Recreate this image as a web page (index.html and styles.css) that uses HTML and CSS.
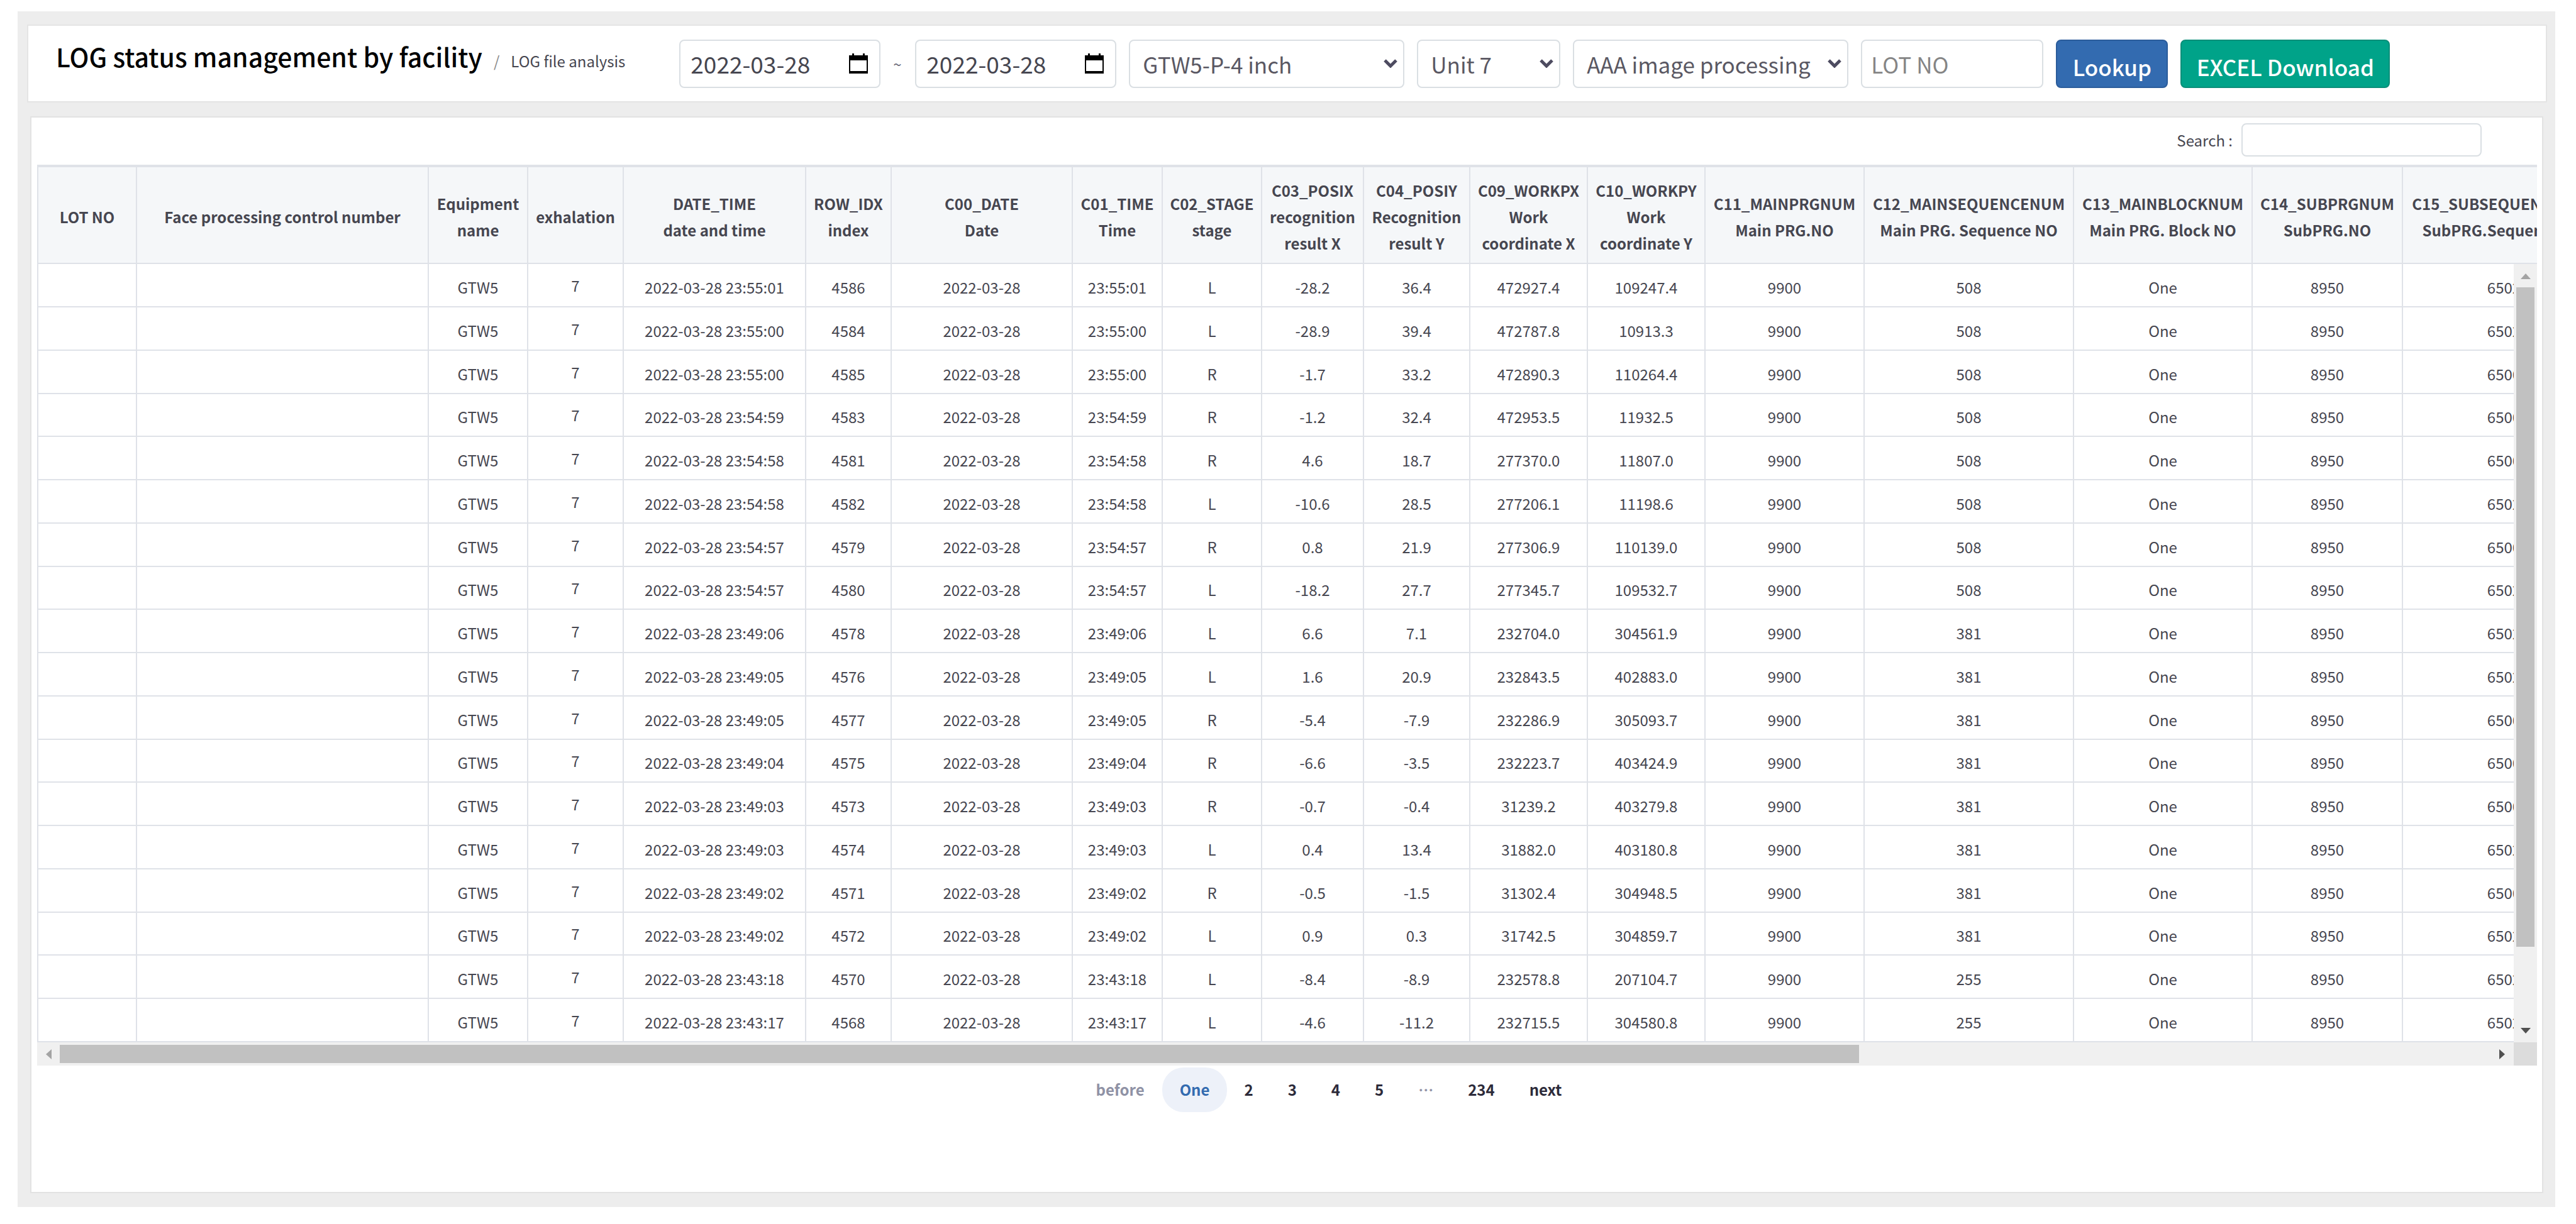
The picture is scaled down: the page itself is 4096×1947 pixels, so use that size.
FILE: index.html
```html
<!DOCTYPE html>
<html lang="en">
<head>
<meta charset="utf-8">
<title>LOG status management by facility</title>
<link rel="stylesheet" href="styles.css">
</head>
<body>
<main class="page">
  <header class="topbar">
    <div class="heading">
      <h1 class="heading-title">LOG status management by facility</h1>
      <span class="heading-slash">/</span>
      <span class="heading-sub">LOG file analysis</span>
    </div>
    <form class="filters">
      <div class="date-field">
        <input class="date-input" type="text" value="2022-03-28" aria-label="Start date">
        <button class="date-button" type="button" aria-label="Open start calendar">
          <svg class="date-icon" viewBox="0 0 30 32"><path d="M1 4h28v27H1z" fill="#fff" stroke="#000" stroke-width="2"/><path d="M0 3h5V0h3v3h14V0h3v3h5v8H0zM0 28h30v3H0z" fill="#000"/></svg>
        </button>
      </div>
      <span class="range-mark">~</span>
      <div class="date-field">
        <input class="date-input" type="text" value="2022-03-28" aria-label="End date">
        <button class="date-button" type="button" aria-label="Open end calendar">
          <svg class="date-icon" viewBox="0 0 30 32"><path d="M1 4h28v27H1z" fill="#fff" stroke="#000" stroke-width="2"/><path d="M0 3h5V0h3v3h14V0h3v3h5v8H0zM0 28h30v3H0z" fill="#000"/></svg>
        </button>
      </div>
      <div class="select-field select-wide">
        <select class="select" aria-label="Equipment"><option>GTW5-P-4 inch</option></select>
        <svg class="select-arrow" viewBox="0 0 22 14"><path d="M2 2l9 9 9-9" fill="none" stroke="#4d4b60" stroke-width="5"/></svg>
      </div>
      <div class="select-field select-narrow">
        <select class="select" aria-label="Unit"><option>Unit 7</option></select>
        <svg class="select-arrow" viewBox="0 0 22 14"><path d="M2 2l9 9 9-9" fill="none" stroke="#4d4b60" stroke-width="5"/></svg>
      </div>
      <div class="select-field select-wide">
        <select class="select" aria-label="Process"><option>AAA image processing</option></select>
        <svg class="select-arrow" viewBox="0 0 22 14"><path d="M2 2l9 9 9-9" fill="none" stroke="#4d4b60" stroke-width="5"/></svg>
      </div>
      <input class="lot-input" type="text" placeholder="LOT NO" aria-label="LOT NO">
      <button class="button button-lookup" type="button">Lookup</button>
      <button class="button button-excel" type="button">EXCEL Download</button>
    </form>
  </header>

  <section class="panel">
    <div class="search">
      <label class="search-label" for="search">Search :</label>
      <input class="search-input" id="search" type="text">
    </div>

    <div class="viewport">
      <table class="log">
        <colgroup>
          <col class="c-lot"><col class="c-face"><col class="c-equip"><col class="c-unit"><col class="c-datetime"><col class="c-row"><col class="c-date"><col class="c-time"><col class="c-stage"><col class="c-posx"><col class="c-posy"><col class="c-work"><col class="c-work"><col class="c-prg"><col class="c-seq"><col class="c-block"><col class="c-subprg"><col class="c-subseq">
        </colgroup>
        <thead>
          <tr>
            <th>LOT NO</th>
            <th>Face processing control number</th>
            <th>Equipment<br>name</th>
            <th>exhalation</th>
            <th>DATE_TIME<br>date and time</th>
            <th>ROW_IDX<br>index</th>
            <th>C00_DATE<br>Date</th>
            <th>C01_TIME<br>Time</th>
            <th>C02_STAGE<br>stage</th>
            <th>C03_POSIX<br>recognition<br>result X</th>
            <th>C04_POSIY<br>Recognition<br>result Y</th>
            <th>C09_WORKPX<br>Work<br>coordinate X</th>
            <th>C10_WORKPY<br>Work<br>coordinate Y</th>
            <th>C11_MAINPRGNUM<br>Main PRG.NO</th>
            <th>C12_MAINSEQUENCENUM<br>Main PRG. Sequence NO</th>
            <th>C13_MAINBLOCKNUM<br>Main PRG. Block NO</th>
            <th>C14_SUBPRGNUM<br>SubPRG.NO</th>
            <th>C15_SUBSEQUENCENUM<br>SubPRG.Sequence NO</th>
          </tr>
        </thead>
        <tbody id="rows"></tbody>
      </table>
      <div class="vbar">
        <svg class="vbar-arrow" viewBox="0 0 16 9"><path d="M8 0l8 9H0z" fill="#a3a3a3"/></svg>
        <div class="vbar-track"><div class="vbar-thumb"></div></div>
        <svg class="vbar-arrow" viewBox="0 0 16 9"><path d="M0 0h16L8 9z" fill="#505050"/></svg>
      </div>
    </div>
    <div class="hbar">
      <div class="hbar-body">
        <svg class="hbar-arrow" viewBox="0 0 9 16"><path d="M9 0v16L0 8z" fill="#a3a3a3"/></svg>
        <div class="hbar-track"><div class="hbar-thumb"></div></div>
        <svg class="hbar-arrow" viewBox="0 0 9 16"><path d="M0 0l9 8-9 8z" fill="#505050"/></svg>
      </div>
      <div class="hbar-corner"></div>
    </div>

    <nav class="pager" aria-label="Pages">
      <a class="page-link is-muted" href="#">before</a>
      <a class="page-link is-current" href="#">One</a>
      <a class="page-link" href="#">2</a>
      <a class="page-link" href="#">3</a>
      <a class="page-link" href="#">4</a>
      <a class="page-link" href="#">5</a>
      <span class="page-link is-muted">…</span>
      <a class="page-link" href="#">234</a>
      <a class="page-link" href="#">next</a>
    </nav>
  </section>
</main>
<script src="script.js"></script>
</body>
</html>
```
FILE: styles.css
```css
* {
  box-sizing: border-box;
}

body {
  margin: 0;
  min-height: 100vh;
  display: flex;
  padding: 18px 33px 27px 28px;
  background: #fff;
  color: #464650;
  font-family: "Noto Sans CJK KR", "Noto Sans", sans-serif;
  font-size: 24px;
}

input,
select,
button {
  font: inherit;
  color: inherit;
  margin: 0;
}

.page {
  flex: 1;
  min-width: 0;
  display: flex;
  flex-direction: column;
  gap: 22px;
  padding: 21px 13px 22px 15px;
  background: #ededed;
}

/* Top bar */

.topbar {
  display: flex;
  align-items: center;
  gap: 86px;
  height: 124px;
  padding-left: 44px;
  background: #fff;
  border: 2px solid #e4e4e4;
}

.heading {
  display: flex;
  align-items: baseline;
  gap: 18px;
  padding-bottom: 16px;
  line-height: 60px;
  white-space: nowrap;
}

.heading-title {
  margin: 0;
  color: #000;
  font-size: 41px;
  font-weight: 500;
}

.heading-slash {
  color: #8a8a8a;
}

.filters {
  display: flex;
  align-items: center;
  gap: 20px;
  font-size: 35px;
}

.date-field,
.lot-input,
.select {
  height: 77px;
  background: #fff;
  border: 2px solid #dadfe3;
  border-radius: 8px;
}

.date-field {
  display: flex;
  align-items: center;
  width: 320px;
  padding: 0 18px 0 16px;
  font-size: 37px;
}

.date-input {
  flex: 1;
  min-width: 0;
  padding: 0;
  border: 0;
  background: none;
}

.date-button {
  display: flex;
  padding: 0;
  border: 0;
  background: none;
}

.date-icon {
  width: 30px;
  height: 32px;
}

.range-mark {
  width: 15px;
  color: #6b6b78;
  font-size: 24px;
}

.select-field {
  display: grid;
  align-items: center;
}

.select-wide {
  width: 438px;
}

.select-narrow {
  width: 228px;
}

.select {
  grid-area: 1 / 1;
  width: 100%;
  padding: 0 40px 0 20px;
  color: #5a5863;
  appearance: none;
}

.select-arrow {
  grid-area: 1 / 1;
  justify-self: end;
  width: 22px;
  height: 14px;
  margin-right: 11px;
  pointer-events: none;
}

.lot-input {
  width: 290px;
  padding: 0 14px;
}

.lot-input::placeholder {
  color: #858585;
  opacity: 1;
}

.button {
  height: 77px;
  padding: 8px 0 0;
  border: 2px solid;
  border-radius: 8px;
  color: #fff;
  font-weight: 500;
}

.button-lookup {
  width: 178px;
  background: #336bb0;
  border-color: #2b5c9b;
}

.button-excel {
  width: 333px;
  background: #00a389;
  border-color: #0a8e79;
}

/* Data panel */

.panel {
  flex: 1;
  min-width: 0;
  margin: 0 6px 0 5px;
  padding: 9px 8px 0 9px;
  background: #fff;
  border: 2px solid #e2e2e2;
}

.search {
  display: flex;
  justify-content: flex-end;
  align-items: center;
  gap: 14px;
  padding: 0 88px 13px 0;
}

.search-input {
  width: 382px;
  height: 53px;
  padding: 0 12px;
  background: #fff;
  border: 2px solid #dadfe3;
  border-radius: 8px;
}

.viewport {
  position: relative;
  overflow: hidden;
}

.log {
  width: 4085px;
  table-layout: fixed;
  border-collapse: separate;
  border-spacing: 0;
  text-align: center;
}

.c-lot { width: 159px; }
.c-face { width: 464px; }
.c-equip { width: 158px; }
.c-unit { width: 152px; }
.c-datetime { width: 290px; }
.c-row { width: 136px; }
.c-date { width: 288px; }
.c-time { width: 143px; }
.c-stage { width: 158px; }
.c-posx { width: 162px; }
.c-posy { width: 169px; }
.c-work { width: 187px; }
.c-prg { width: 253px; }
.c-seq { width: 333px; }
.c-block { width: 284px; }
.c-subprg { width: 239px; }
.c-subseq { width: 323px; }

.log th,
.log td {
  border: solid #dfe2e8;
  border-width: 0 2px 2px 0;
  white-space: nowrap;
}

.log th:first-child,
.log td:first-child {
  border-left-width: 2px;
}

.log th {
  height: 158px;
  padding: 6px 0 0;
  border-top-width: 4px;
  background: #f5f7f9;
  font-weight: 700;
  line-height: 42px;
}

.log td {
  height: 69px;
  padding: 6px 0 0;
  line-height: 36px;
}

.log tr:nth-child(4n) td {
  height: 68px;
}

.log .unit {
  padding: 0;
}

/* Scroll bars */

.vbar {
  position: absolute;
  top: 158px;
  right: 0;
  bottom: 0;
  display: flex;
  flex-direction: column;
  align-items: center;
  gap: 13px;
  width: 37px;
  padding: 15px 0 14px;
  background: #f0f0f0;
}

.vbar-arrow {
  width: 16px;
  height: 9px;
}

.vbar-track {
  flex: 1;
}

.vbar-thumb {
  width: 29px;
  height: 90%;
  background: #c1c1c1;
}

.hbar {
  display: flex;
  height: 37px;
}

.hbar-body {
  flex: 1;
  display: flex;
  align-items: center;
  gap: 13px;
  padding: 0 14px;
  background: #f0f0f0;
}

.hbar-arrow {
  width: 9px;
  height: 16px;
}

.hbar-track {
  flex: 1;
}

.hbar-thumb {
  width: 74%;
  height: 29px;
  background: #c1c1c1;
}

.hbar-corner {
  width: 37px;
  background: #dcdcdc;
}

/* Pager */

.pager {
  display: flex;
  justify-content: center;
  padding: 3px 0 0 134px;
}

.page-link {
  height: 71px;
  padding: 0 28px 0 27px;
  border-radius: 34px;
  color: #2d2b3a;
  font-weight: 700;
  line-height: 69px;
  text-decoration: none;
}

.page-link.is-muted {
  color: #8f92a5;
}

.page-link.is-current {
  padding: 0 28px;
  background: #edf1f9;
  color: #336bb0;
}
```
FILE: script.js
```js
// Log entries: time, row index, stage, pos X, pos Y, work X, work Y, main sequence
const entries = [
  ["23:55:01", 4586, "L", "-28.2", "36.4", "472927.4", "109247.4", 508],
  ["23:55:00", 4584, "L", "-28.9", "39.4", "472787.8", "10913.3", 508],
  ["23:55:00", 4585, "R", "-1.7", "33.2", "472890.3", "110264.4", 508],
  ["23:54:59", 4583, "R", "-1.2", "32.4", "472953.5", "11932.5", 508],
  ["23:54:58", 4581, "R", "4.6", "18.7", "277370.0", "11807.0", 508],
  ["23:54:58", 4582, "L", "-10.6", "28.5", "277206.1", "11198.6", 508],
  ["23:54:57", 4579, "R", "0.8", "21.9", "277306.9", "110139.0", 508],
  ["23:54:57", 4580, "L", "-18.2", "27.7", "277345.7", "109532.7", 508],
  ["23:49:06", 4578, "L", "6.6", "7.1", "232704.0", "304561.9", 381],
  ["23:49:05", 4576, "L", "1.6", "20.9", "232843.5", "402883.0", 381],
  ["23:49:05", 4577, "R", "-5.4", "-7.9", "232286.9", "305093.7", 381],
  ["23:49:04", 4575, "R", "-6.6", "-3.5", "232223.7", "403424.9", 381],
  ["23:49:03", 4573, "R", "-0.7", "-0.4", "31239.2", "403279.8", 381],
  ["23:49:03", 4574, "L", "0.4", "13.4", "31882.0", "403180.8", 381],
  ["23:49:02", 4571, "R", "-0.5", "-1.5", "31302.4", "304948.5", 381],
  ["23:49:02", 4572, "L", "0.9", "0.3", "31742.5", "304859.7", 381],
  ["23:43:18", 4570, "L", "-8.4", "-8.9", "232578.8", "207104.7", 255],
  ["23:43:17", 4568, "L", "-4.6", "-11.2", "232715.5", "304580.8", 255]
];

const day = "2022-03-28";
const body = document.getElementById("rows");

for (const [time, index, stage, posX, posY, workX, workY, sequence] of entries) {
  const row = body.insertRow();
  const subSequence = stage === "L" ? 6502 : 6500;
  const cells = ["", "", "GTW5", "7", `${day} ${time}`, index, day, time, stage,
    posX, posY, workX, workY, "9900", sequence, "One", "8950", subSequence];
  cells.forEach((value, column) => {
    const cell = row.insertCell();
    cell.textContent = value;
    if (column === 3) cell.className = "unit";
  });
}
```
